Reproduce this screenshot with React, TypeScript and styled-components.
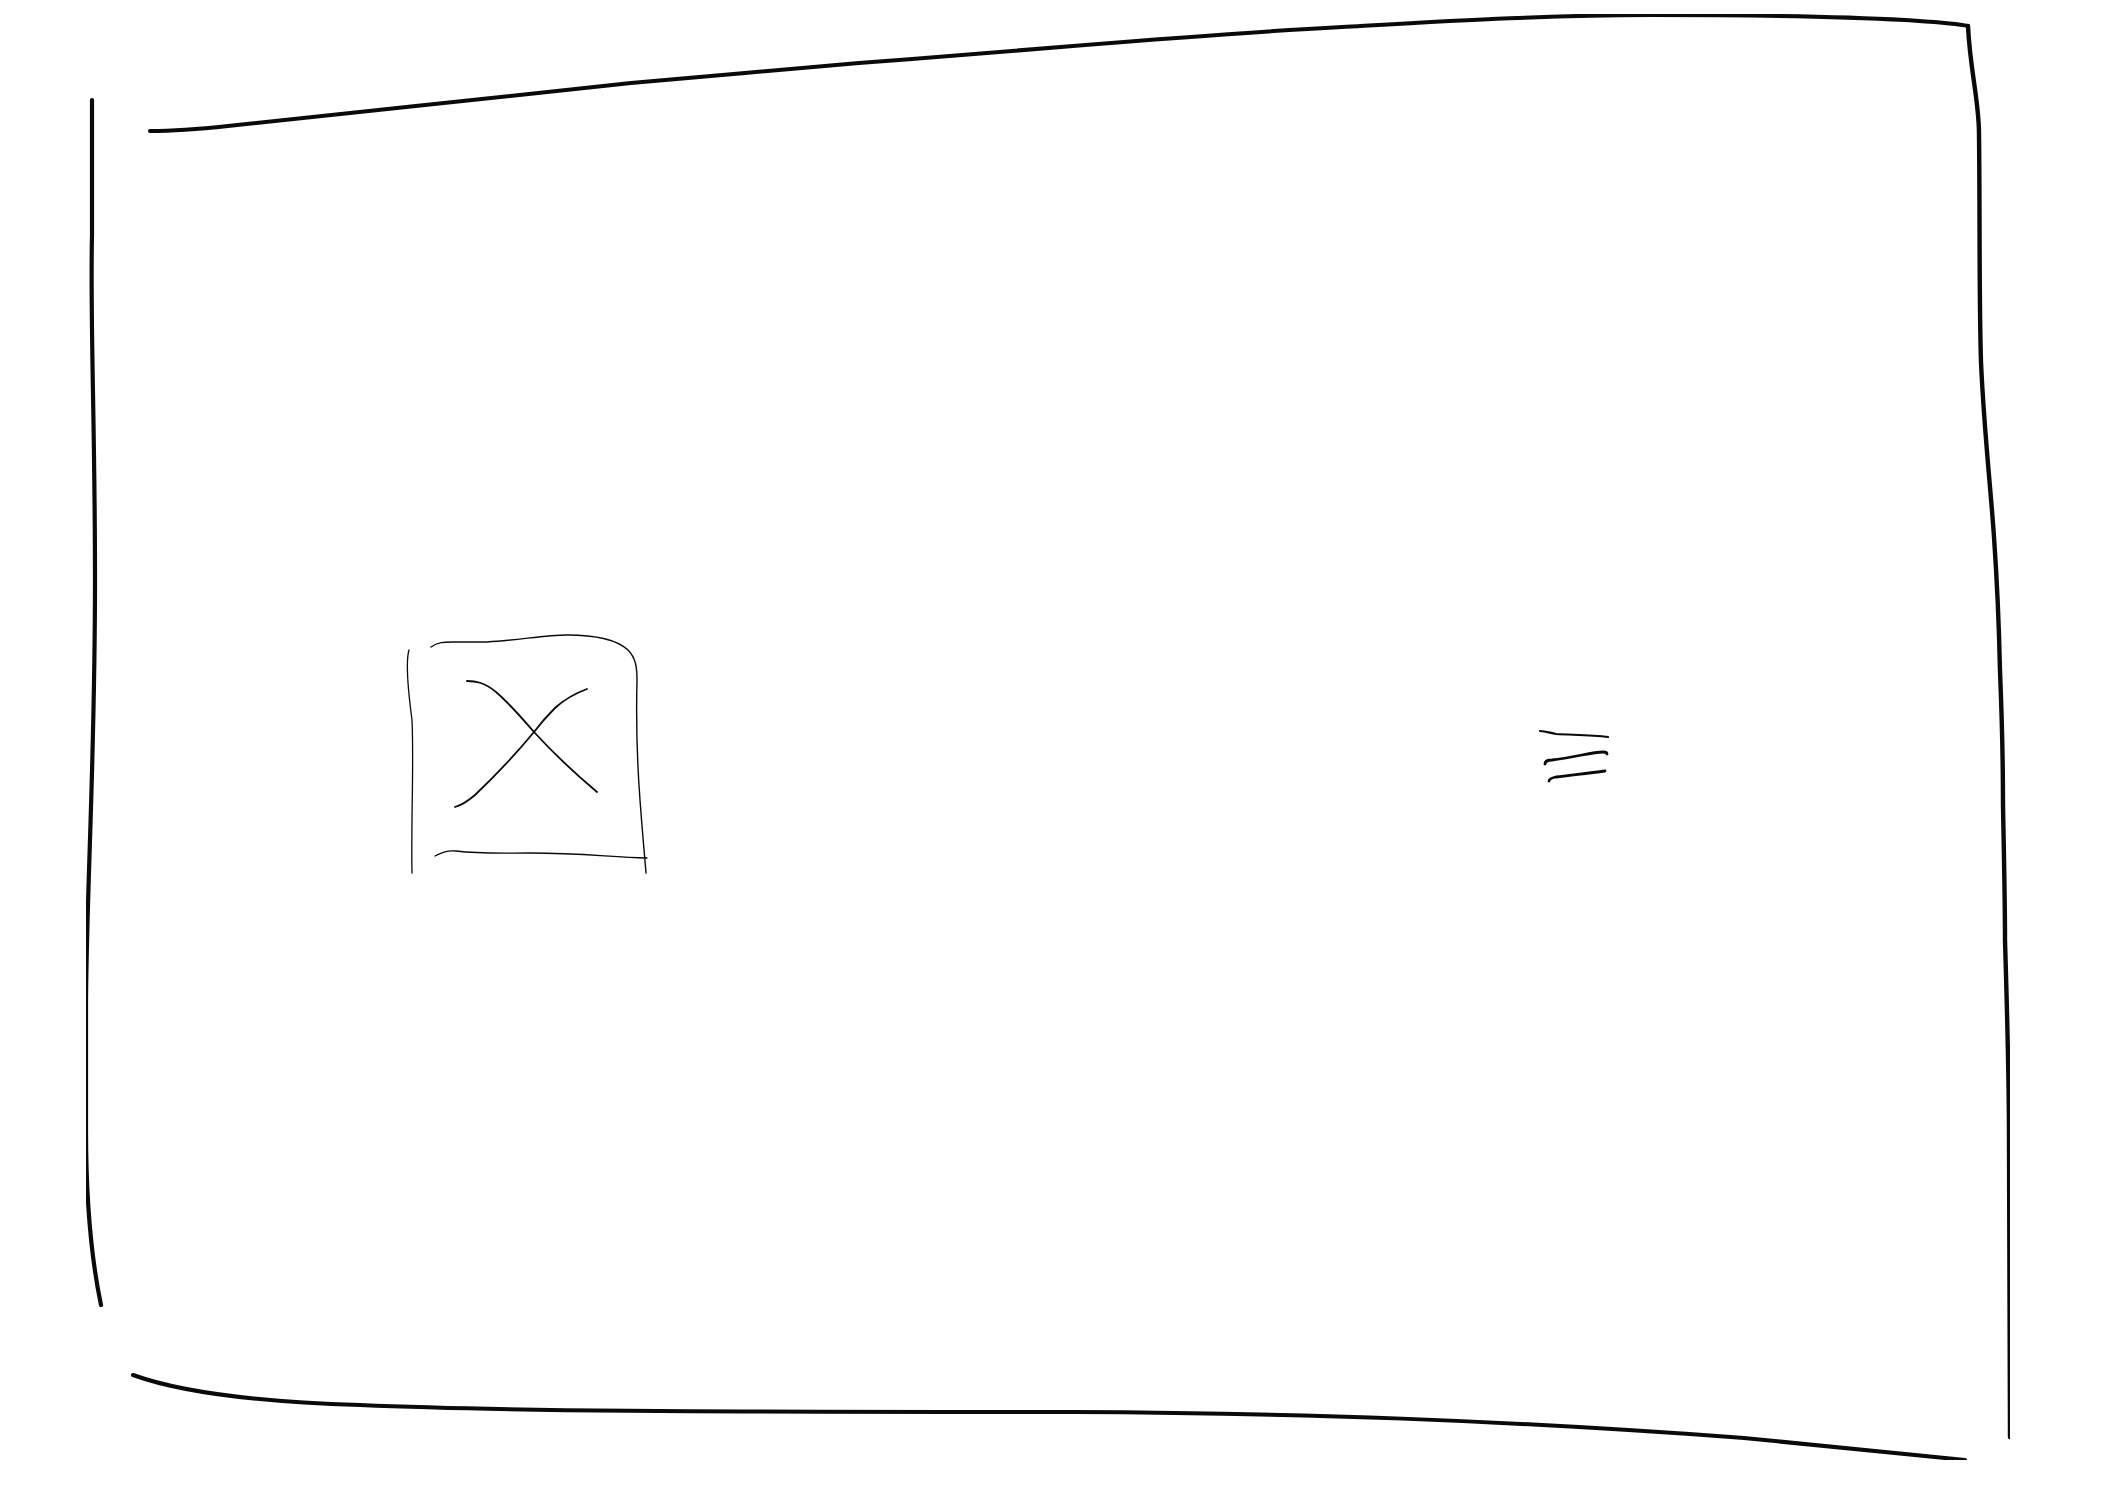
import React from "react";
import styled, {createGlobalStyle} from "styled-components";

const GlobalStyle = createGlobalStyle`
    html, body {
        margin: 0;
        padding: 0;
        background: #ffffff;
        font-family: 'Liberation Sans', Arial, sans-serif;
    }
`;

const Page = styled.div`
    width: 2104px;
    height: 1504px;
    padding: 14px 0 0 86px;
    box-sizing: border-box;
    background: #ffffff;
    overflow: hidden;
`;

const Frame = styled.div`
    position: relative;
    width: 1924px;
    height: 1446px;
`;

const FrameStroke = styled.svg`
    position: absolute;
    inset: 0;
    width: 100%;
    height: 100%;
    pointer-events: none;
`;

const Row = styled.div`
    display: flex;
    flex-direction: row;
    align-items: flex-start;
    gap: 885px;
    padding: 616px 0 0 319px;
`;

const ImagePlaceholder = styled.svg`
    display: block;
    width: 245px;
    height: 248px;
    flex: none;
`;

const TextLines = styled.svg`
    display: block;
    width: 77px;
    height: 61px;
    margin-top: 95px;
    flex: none;
`;

const ink = "#0a0a0a";

function SketchFrame() {
    return (
        <FrameStroke viewBox="86 14 1924 1446" fill="none" stroke={ink} strokeLinecap="round" strokeLinejoin="round">
            {/* left */}
            <path strokeWidth={4.2} d="M92,100 L92,235 C90,320 95,420 95,580 C95,760 87,880 86,1000 L86,1130 C86,1200 92,1262 101,1305"/>
            {/* top */}
            <path strokeWidth={4} d="M150,131 C175,131 200,129 228,126 C360,112 500,97 631,83 C710,76 780,70 859,63 C930,58 1000,52 1073,46 C1160,39 1250,32 1342,27 C1450,21 1550,15 1650,15 C1760,15 1850,17 1905,20 C1935,22 1955,23 1968,26"/>
            {/* right */}
            <path strokeWidth={4.4} d="M1968,26 C1970,70 1979,100 1979,134 C1980,220 1979,300 1981,362 C1984,430 1990,480 1994,537 C1997,580 1999,625 2000,671 C2002,720 2003,760 2003,805 C2004,860 2005,900 2005,940 C2007,1010 2009,1070 2009,1140 L2010,1437"/>
            {/* bottom */}
            <path strokeWidth={4} d="M133,1375 C180,1392 260,1402 360,1405 C500,1411 700,1412 1073,1412 C1300,1413 1500,1420 1744,1438 L1965,1460"/>
        </FrameStroke>
    );
}

function ImageIcon() {
    return (
        <ImagePlaceholder viewBox="405 630 245 248" fill="none" stroke={ink} strokeLinecap="round" strokeLinejoin="round">
            <path strokeWidth={1.3} d="M409,650 C406,660 408,690 412,720 C414,760 411,820 412,873"/>
            <path strokeWidth={1.4} d="M431,647 C438,642 444,642 452,642 L487,642 C520,640 545,635 567,635 C590,635 615,638 628,650 C636,658 637,668 637,680 C636,720 637,760 640,800 C643,840 645,860 646,873"/>
            <path strokeWidth={1.3} d="M435,856 C442,852 448,850 456,851 C480,854 500,853 530,853 C580,853 610,857 647,858"/>
            <path strokeWidth={1.8} d="M467,681 C475,681 484,682 496,692 C510,704 522,718 534,732 C555,755 578,776 597,792"/>
            <path strokeWidth={1.8} d="M587,689 C576,693 566,698 555,708 C548,715 540,724 534,732 C515,755 495,776 475,795 C468,801 462,805 455,807"/>
        </ImagePlaceholder>
    );
}

function TextIcon() {
    return (
        <TextLines viewBox="1535 725 77 61" fill="none" stroke={ink} strokeLinecap="round" strokeLinejoin="round">
            <path strokeWidth={2.2} d="M1540,731 C1546,731 1550,733 1556,734 C1575,735 1592,735 1608,737"/>
            <path strokeWidth={2.8} d="M1545,764 C1545,761 1547,760 1552,760 C1562,759 1572,757 1582,755 C1592,753 1598,752 1603,752 C1606,752 1607,753 1607,754"/>
            <path strokeWidth={2.8} d="M1549,781 C1549,779 1551,778 1556,777 C1572,775 1590,773 1605,771"/>
        </TextLines>
    );
}

export default function App() {
    return (
        <Page>
            <GlobalStyle/>
            <Frame>
                <SketchFrame/>
                <Row>
                    <ImageIcon/>
                    <TextIcon/>
                </Row>
            </Frame>
        </Page>
    );
}
